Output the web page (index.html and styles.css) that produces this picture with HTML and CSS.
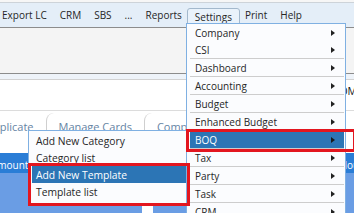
FILE: index.html
```html
<!DOCTYPE html>
<html>
<head>
<meta charset="utf-8">
<link rel="stylesheet" href="styles.css">
</head>
<body>
<div class="app">
  <div class="topline"></div>
  <nav class="menubar">
    <span class="mi">Export LC</span>
    <span class="mi">CRM</span>
    <span class="mi">SBS</span>
    <span class="mi">...</span>
    <span class="mi">Reports</span>
    <span class="mi active">Settings</span>
    <span class="mi">Print</span>
    <span class="mi">Help</span>
  </nav>
  <div class="toolbar"></div>
  <div class="strip"></div>
  <div class="ribbon"><span class="ribbon-text">OM</span></div>
  <div class="tabs">
    <span class="tab first">Duplicate</span>
    <span class="tab">Manage Cards</span>
    <span class="tab">Compare Cards</span>
    <span class="tab">Card</span>
  </div>
  <div class="spacer"></div>
  <div class="band">
    <span class="hcell first">Amount</span>
    <span class="hcell last">Hours</span>
  </div>
  <div class="gridbody">
    <div class="col"></div>
    <div class="col gapcol"></div>
    <div class="col"></div>
  </div>
</div>

<div class="menu submenu">
  <div class="mitem">Add New Category</div>
  <div class="mitem">Category list</div>
  <div class="mitem hl">Add New Template</div>
  <div class="mitem">Template list</div>
</div>

<div class="menu settings-menu">
  <div class="mitem"><span class="label">Company</span><span class="arrow"></span></div>
  <div class="mitem"><span class="label">CSI</span><span class="arrow"></span></div>
  <div class="sep"></div>
  <div class="mitem"><span class="label">Dashboard</span><span class="arrow"></span></div>
  <div class="sep"></div>
  <div class="mitem"><span class="label">Accounting</span><span class="arrow"></span></div>
  <div class="sep"></div>
  <div class="mitem"><span class="label">Budget</span><span class="arrow"></span></div>
  <div class="sep"></div>
  <div class="mitem"><span class="label">Enhanced Budget</span><span class="arrow"></span></div>
  <div class="sep"></div>
  <div class="mitem hl"><span class="label">BOQ</span><span class="arrow"></span></div>
  <div class="sep"></div>
  <div class="mitem"><span class="label">Tax</span><span class="arrow"></span></div>
  <div class="sep"></div>
  <div class="mitem"><span class="label">Party</span><span class="arrow"></span></div>
  <div class="sep"></div>
  <div class="mitem"><span class="label">Task</span><span class="arrow"></span></div>
  <div class="sep"></div>
  <div class="mitem"><span class="label">CRM</span><span class="arrow"></span></div>
</div>

<div class="redbox boq-box"></div>
<div class="redbox tpl-box"></div>
</body>
</html>
```

FILE: styles.css
```css
* { box-sizing: border-box; }
html, body { margin: 0; padding: 0; }
body {
  width: 354px;
  height: 213px;
  overflow: hidden;
  position: relative;
  background: #ffffff;
  font-family: "Open Sans", "Noto Sans", sans-serif;
  font-size: 10px;
  color: #262626;
}
.app { display: flex; flex-direction: column; height: 213px; }

.topline { height: 3px; flex: none; background: #f6f6f6; border-bottom: 1px solid #cdd3d9; }

.menubar {
  height: 25px; flex: none;
  background: #e4eef8;
  border-bottom: 1px solid #8c8c8c;
  display: flex; align-items: center;
  padding-left: 2px;
  gap: 13px;
  white-space: nowrap;
}
.mi { line-height: 16px; }
.mi.active {
  padding: 0 7px;
  margin: 0 -8px;
  height: 18px;
  margin-top: 3px;
  border: 1px solid #a3b8cc;
  border-radius: 3px;
  background: #e9f2fb;
}

.toolbar { height: 46px; flex: none; background: #f4f4f4; border-bottom: 1px solid #8c8c8c; }
.strip { height: 6px; flex: none; background: #eef3f9; border-bottom: 1px solid #d2d2d2; }

.ribbon {
  height: 31px; flex: none;
  border-bottom: 1px solid #dcdcdc;
  display: flex; justify-content: flex-end; align-items: flex-start;
  padding-top: 4px;
}
.ribbon-text { margin-right: -3px; font-size: 10.5px; color: #111; }

.tabs {
  height: 30px; flex: none;
  display: flex; align-items: flex-start;
  padding-top: 2px;
  margin-left: -27px;
  white-space: nowrap;
}
.tab {
  height: 23px;
  padding: 6px 12px 0 12px;
  line-height: 15px;
  font-size: 11px;
  color: #6584a4;
  border-left: 1px solid #cfcfcf;
  border-top-left-radius: 8px;
}
.tab.first { border-left: none; }

.spacer { height: 12px; flex: none; }

.band {
  height: 20px; flex: none;
  background: #2a7dd6;
  color: #fff;
  display: flex; align-items: flex-end;
  font-size: 10px;
  line-height: 15px;
  white-space: nowrap;
}
.hcell.first { margin-left: -9px; }
.hcell.last { margin-left: auto; margin-right: -14px; }

.gridbody { flex: 1; display: grid; grid-template-columns: 142px 11px 1fr; }
.col { background: #6a9de4; }
.col.gapcol { background: #ffffff; }

/* menus (overlays) */
.menu {
  position: absolute;
  background: #fbfcfe;
  border: 1px solid #7fb0e2;
  white-space: nowrap;
}
.settings-menu {
  left: 186px; top: 23px;
  width: 160px;
  padding: 0 1px 0 3px;
  z-index: 2;
}
.submenu {
  left: 28px; top: 130px;
  width: 160px;
  padding: 1px 1px 3px 3px;
  z-index: 1;
  font-size: 10.3px;
}
.mitem {
  height: 17px;
  display: flex; align-items: center;
  padding-left: 5px;
}
.submenu .mitem { padding-left: 4px; }
.mitem.hl { background: #2c75b5; color: #fff; }
.label { flex: 1; }
.arrow {
  width: 0; height: 0;
  border-left: 4px solid #222;
  border-top: 3px solid transparent;
  border-bottom: 3px solid transparent;
  margin-right: 9px;
}
.mitem.hl .arrow { border-left-color: #1a1a1a; }
.sep { height: 1px; background: #cdcdcd; }

.redbox {
  position: absolute;
  border: 3px solid #e3161f;
  z-index: 3;
}
.boq-box { left: 186px; top: 129px; width: 170px; height: 23px; }
.tpl-box { left: 28px; top: 163px; width: 162px; height: 43px; }
```
